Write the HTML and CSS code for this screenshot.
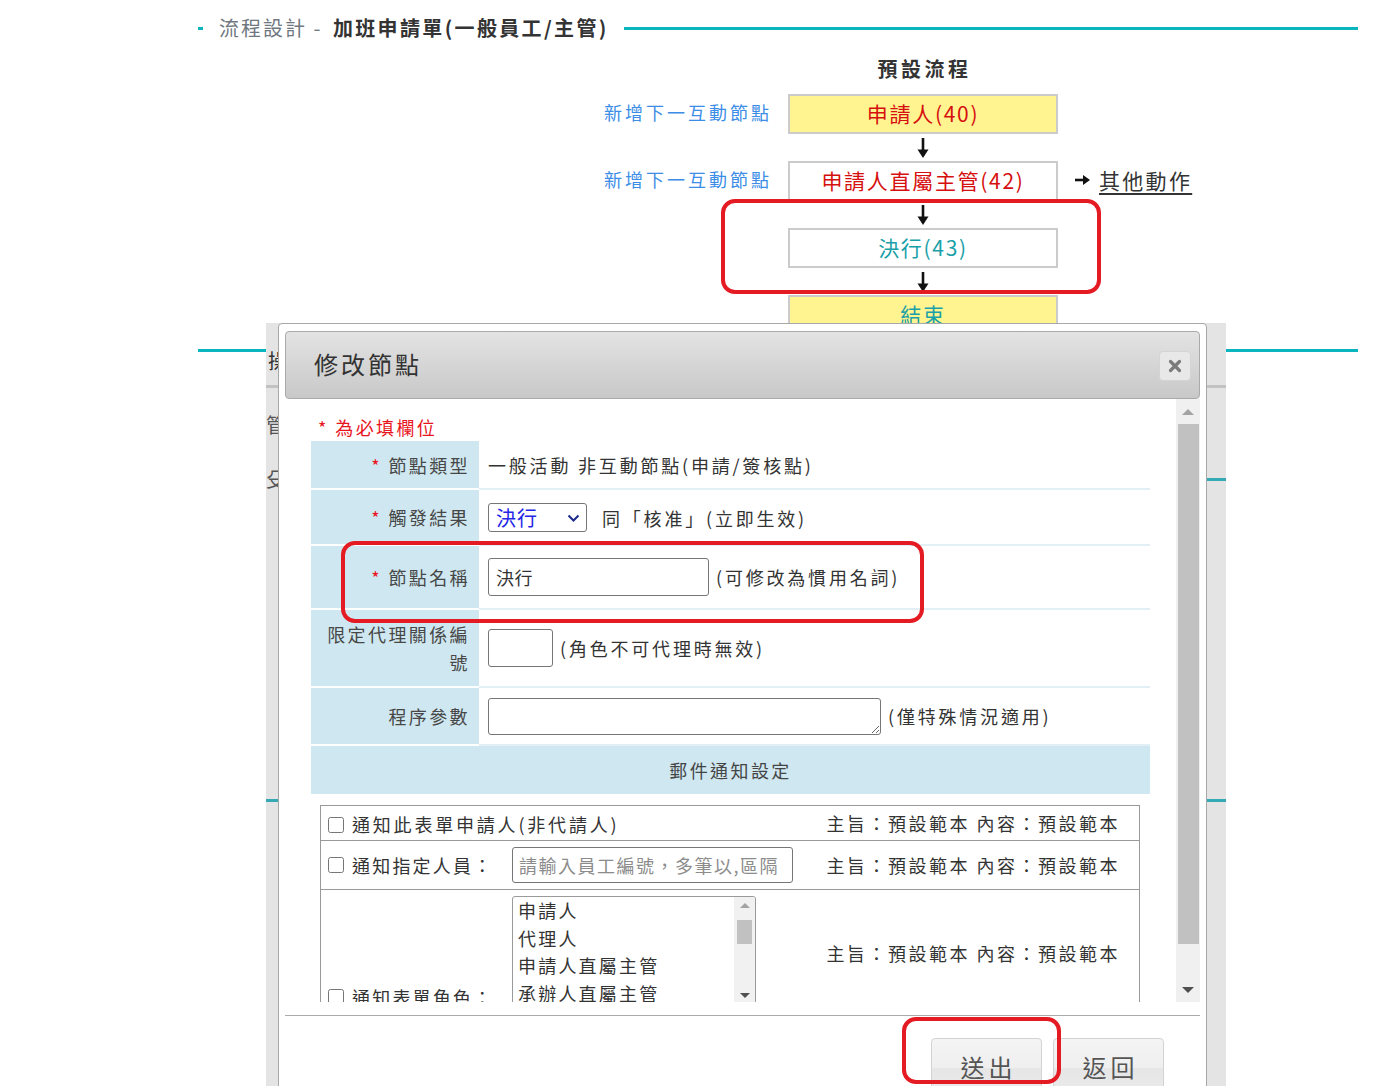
FILE: index.html
```html
<!DOCTYPE html>
<html lang="zh-Hant">
<head>
<meta charset="utf-8">
<title>修改節點</title>
<link rel="stylesheet" href="styles.css">
</head>
<body>
<div class="page">
  <header class="sec-head">
    <span class="dash"></span>
    <h1 class="sec-title"><span class="crumb">流程設計 - </span><b>加班申請單(一般員工/主管)</b></h1>
    <span class="rule"></span>
  </header>

  <section class="flow">
    <div class="flow-title">預設流程</div>

    <a class="add-link row-a">新增下一互動節點</a>
    <div class="node yellow row-a"><span class="red">申請人(40)</span></div>
    <div class="arrow row-b"><svg width="14" height="20" viewBox="0 0 14 20"><path d="M7 0V13" stroke="#111" stroke-width="2.6"/><path d="M1.5 11.5H12.5L7 20Z" fill="#111"/></svg></div>

    <a class="add-link row-c">新增下一互動節點</a>
    <div class="node row-c"><span class="red">申請人直屬主管(42)</span></div>
    <div class="more row-c"><svg width="15" height="12" viewBox="0 0 15 12"><path d="M0 6H9" stroke="#111" stroke-width="2.6"/><path d="M8 1L15 6L8 11Z" fill="#111"/></svg><a class="more-link">其他動作</a></div>
    <div class="arrow row-d"><svg width="14" height="20" viewBox="0 0 14 20"><path d="M7 0V13" stroke="#111" stroke-width="2.6"/><path d="M1.5 11.5H12.5L7 20Z" fill="#111"/></svg></div>

    <div class="node row-e"><span class="teal">決行(43)</span></div>
    <div class="arrow row-f"><svg width="14" height="20" viewBox="0 0 14 20"><path d="M7 0V13" stroke="#111" stroke-width="2.6"/><path d="M1.5 11.5H12.5L7 20Z" fill="#111"/></svg></div>

    <div class="node yellow row-g"><span class="teal">結束</span></div>
  </section>

  <section class="lower">
    <div class="side"><div class="side-line"></div></div>
    <div class="panel">
      <div class="p-title">操作說明</div>
      <div class="p-bar"></div>
      <div class="p-item">管理者設定</div>
      <div class="p-row"><span class="p-text">殳</span><span class="p-rule"></span></div>
      <div class="p-line"></div>
    </div>
    <div class="side right"><div class="side-line"></div></div>
  </section>
</div>

<div class="dialog">
  <div class="dlg-title">
    <span class="dlg-title-text">修改節點</span>
    <span class="dlg-close"><svg width="14" height="14" viewBox="0 0 14 14"><path d="M2.5 2.5L11.5 11.5M11.5 2.5L2.5 11.5" stroke="#7b7b7b" stroke-width="3.2" stroke-linecap="round"/></svg></span>
  </div>

  <div class="dlg-body">
    <div class="dlg-content">
      <div class="req-note">* 為必填欄位</div>
      <table class="form">
        <tr class="h1">
          <th><span class="req">*</span> 節點類型</th>
          <td>一般活動 非互動節點(申請/簽核點)</td>
        </tr>
        <tr class="h2">
          <th><span class="req">*</span> 觸發結果</th>
          <td><span class="sel"><select><option>決行</option></select><svg class="chev" width="13" height="8" viewBox="0 0 13 8"><path d="M1.5 1.5L6.5 6.5L11.5 1.5" fill="none" stroke="#1c2a8a" stroke-width="2"/></svg></span><span class="after wide">同「核准」(立即生效)</span></td>
        </tr>
        <tr class="h3">
          <th><span class="req">*</span> 節點名稱</th>
          <td><input class="txt name" type="text" value="決行"><span class="after">(可修改為慣用名詞)</span></td>
        </tr>
        <tr class="h4">
          <th>限定代理關係編號</th>
          <td><input class="txt short" type="text"><span class="after">(角色不可代理時無效)</span></td>
        </tr>
        <tr class="h5">
          <th>程序參數</th>
          <td><textarea class="area"></textarea><span class="after">(僅特殊情況適用)</span></td>
        </tr>
        <tr class="h6">
          <th colspan="2" class="section">郵件通知設定</th>
        </tr>
      </table>

      <div class="notify">
        <div class="n-row ra">
          <div class="n-left"><input type="checkbox" class="cb"><span>通知此表單申請人(非代請人)</span></div>
          <div class="subj">主旨：預設範本 內容：預設範本</div>
        </div>
        <div class="n-row rb">
          <div class="n-left"><input type="checkbox" class="cb"><span class="lbl">通知指定人員：</span><input class="txt emp" type="text" placeholder="請輸入員工編號，多筆以,區隔"></div>
          <div class="subj">主旨：預設範本 內容：預設範本</div>
        </div>
        <div class="n-row rc">
          <div class="n-left"><input type="checkbox" class="cb"><span class="lbl">通知表單角色：</span><div class="listbox"><div class="lb-inner"><ul class="lb-items"><li>申請人</li><li>代理人</li><li>申請人直屬主管</li><li>承辦人直屬主管</li><li>承辦人</li></ul><div class="lb-bar"><span class="lb-btn"><span class="tri-up small"></span></span><span class="lb-thumb"></span><span class="lb-fill"></span><span class="lb-btn"><span class="tri-dn small"></span></span></div></div></div></div>
          <div class="subj">主旨：預設範本 內容：預設範本</div>
        </div>
      </div>
    </div>
    <div class="vbar">
      <span class="vbtn"><span class="tri-up"></span></span>
      <span class="vthumb"></span>
      <span class="vfill"></span>
      <span class="vbtn"><span class="tri-dn"></span></span>
    </div>
  </div>

  <div class="dlg-foot">
    <button class="btn">送出</button>
    <button class="btn">返回</button>
  </div>
</div>

<div class="mark m1"></div>
<div class="mark m2"></div>
<div class="mark m3"></div>
</body>
</html>
```

FILE: styles.css
```css
* { box-sizing: border-box; }
html, body { margin: 0; height: 100%; overflow: hidden; background: #fff; }
body {
  font-family: "Noto Sans CJK TC", "Noto Sans", sans-serif;
  color: #333;
  width: 1373px;
  position: relative;
}

/* ---------- page header ---------- */
.page { padding-left: 198px; width: 1358px; }
.sec-head { display: flex; align-items: center; height: 28px; margin-top: 14px; }
.sec-head .dash { width: 5px; height: 3px; background: #0bb5c0; margin-right: 16px; flex: none; }
.sec-title { margin: 0; font-size: 20px; font-weight: 400; letter-spacing: 2px; line-height: 28px; color: #6f7780; white-space: nowrap; }
.sec-title b { color: #333; font-weight: 700; letter-spacing: 2.35px; margin-left: 4px; }
.sec-head .rule { flex: 1; height: 3px; background: #0bb5c0; margin-left: 15px; }

/* ---------- flow diagram ---------- */
.flow {
  height: 281px;
  overflow: hidden;
  padding-top: 16px;
  display: grid;
  grid-template-columns: 572px 270px auto;
  grid-template-rows: 36px 40px 27px 40px 27px 40px 27px 40px;
  column-gap: 18px;
  align-items: center;
}
.flow-title {
  grid-column: 2; grid-row: 1; align-self: start;
  text-align: center; font-size: 20px; font-weight: 700; letter-spacing: 3.5px; padding-left: 3px;
  line-height: 22px; color: #333;
}
.row-a { grid-row: 2; }
.row-b { grid-row: 3; }
.row-c { grid-row: 4; }
.row-d { grid-row: 5; }
.row-e { grid-row: 6; }
.row-f { grid-row: 7; }
.row-g { grid-row: 8; }
.add-link {
  grid-column: 1; justify-self: end; margin-right: -2px; margin-bottom: 4px;
  color: #3b8de6; font-size: 18px; letter-spacing: 3px; text-decoration: none;
}
.node {
  grid-column: 2; height: 40px; border: 2px solid #cbcbcb; background: #fff;
  display: flex; align-items: center; justify-content: center; padding-bottom: 3px;
  font-size: 21px; letter-spacing: 1.7px;
}
.node.yellow { background: #fff48f; }
.red { color: #d60f0f; }
.teal { color: #1aa0a8; }
.arrow { grid-column: 2; justify-self: center; height: 20px; }
.arrow svg { display: block; }
.more { grid-column: 3; display: flex; align-items: center; gap: 9px; margin-left: -1px; margin-bottom: 2px; }
.more-link { font-size: 21px; letter-spacing: 2.3px; color: #333; text-decoration: underline; text-underline-offset: 4px; }

/* ---------- lower background section ---------- */
.lower { display: flex; height: 780px; }
.side { width: 68px; padding-top: 26px; flex: none; }
.side.right { width: 132px; }
.side-line { height: 3px; background: #0bb5c0; }
.panel { width: 960px; flex: none; background: #e4e4e4; }
.p-title { margin: 27px 0 0 2px; font-size: 20px; line-height: 22px; color: #333; }
.p-bar { margin-top: 13px; height: 3px; background: #c2c2c2; }
.p-item { margin-top: 27px; font-size: 20px; line-height: 20px; color: #555; }
.p-row { margin-top: 33px; height: 22px; display: flex; align-items: center; }
.p-text { font-size: 20px; line-height: 22px; color: #555; }
.p-rule { flex: 1; height: 3px; background: #34aab5; margin-left: 20px; }
.p-line { margin-top: 309px; height: 3px; background: #34aab5; }

/* ---------- dialog ---------- */
.dialog {
  position: absolute; left: 278px; top: 323px; width: 929px; height: 790px;
  border: 1px solid #a8a8a8; border-radius: 4px; background: #fff;
  padding: 7px 6px 0; display: flex; flex-direction: column;
}
.dlg-title {
  height: 68px; flex: none; border: 1px solid #aaa; border-radius: 4px;
  background: linear-gradient(#e3e3e3, #c8c8c8);
  display: flex; align-items: center; justify-content: space-between;
  padding: 0 8px 0 28px;
}
.dlg-title-text { font-size: 24px; letter-spacing: 3px; color: #333; margin-top: -3px; }
.dlg-close {
  width: 32px; height: 30px; margin-top: 1px; border: 1px solid #d4d4d4; border-radius: 4px; background: #e8e8e8;
  display: flex; align-items: center; justify-content: center;
}
.dlg-body { height: 603px; flex: none; display: flex; }
.dlg-content { flex: 1; overflow: hidden; padding: 15px 26px 0; }

.req-note { font-size: 18px; line-height: 26px; letter-spacing: 2.4px; color: #e8141c; padding-left: 7px; margin-bottom: 1px; }

.form { width: 100%; border-collapse: separate; border-spacing: 0; font-size: 18px; letter-spacing: 2.8px; color: #333; }
.form th, .form td { box-sizing: border-box; vertical-align: middle; }
.form th {
  width: 168px; background: #cfe7f0; text-align: right; font-weight: 400; color: #474747;
  padding: 0 9px 0 10px; border-bottom: 2px solid #fff; line-height: 28px; letter-spacing: 2.4px;
}
.form td { padding: 0 0 0 9px; border-bottom: 2px solid #e2eff5; white-space: nowrap; }
.h1 th, .h1 td { height: 49px; }
.h2 th, .h2 td { height: 56px; }
.h3 th, .h3 td { height: 64px; }
.h4 th, .h4 td { height: 78px; }
.h5 th, .h5 td { height: 58px; }
.form th.section { height: 48px; text-align: center; padding: 0; border-bottom: 0; color: #444; letter-spacing: 2.4px; }
.req { color: #e8141c; }
.after { margin-left: 7px; vertical-align: middle; }
.after.wide { margin-left: 15px; }

.sel { position: relative; display: inline-block; width: 99px; height: 29px; vertical-align: middle; }
.sel select {
  appearance: none; -webkit-appearance: none; width: 100%; height: 100%;
  border: 1px solid #767676; border-radius: 3px; background: #fff;
  font-family: inherit; font-size: 20px; letter-spacing: 1px; color: #2525e8; padding: 0 0 0 7px; line-height: 27px;
}
.sel .chev { position: absolute; right: 7px; top: 11px; pointer-events: none; }

.txt {
  border: 1px solid #767676; border-radius: 3px; background: #fff;
  font-family: inherit; font-size: 18px; color: #333; padding: 0 7px; vertical-align: middle; letter-spacing: 0.5px;
}
.txt.name { width: 221px; height: 38px; }
.txt.short { width: 65px; height: 38px; }
.area {
  width: 393px; height: 37px; border: 1px solid #767676; border-radius: 3px;
  font-family: inherit; font-size: 18px; vertical-align: middle; padding: 2px 6px;
}

/* notify box */
.notify { margin: 11px 10px 0 9px; border: 1px solid #999; border-bottom: 0; font-size: 18px; color: #333; }
.n-row { display: grid; grid-template-columns: 1fr auto; align-items: center; border-bottom: 1px solid #999; }
.ra { height: 35px; }
.rb { height: 49px; }
.n-left { padding-left: 7px; white-space: nowrap; letter-spacing: 2.8px; }
.cb { width: 16px; height: 16px; margin: 0 8px 0 0; vertical-align: middle; }
.n-left span { vertical-align: middle; }
.lbl { display: inline-block; width: 160px; letter-spacing: 2.2px; }
.subj { padding-right: 19px; text-align: right; letter-spacing: 2.5px; white-space: nowrap; }
.txt.emp { width: 281px; height: 36px; padding: 0 6px; }
.txt.emp::placeholder { color: #8c8c8c; letter-spacing: 1.5px; }

.rc .n-left { padding-top: 6px; padding-bottom: 6px; }
.rc .n-left .cb, .rc .n-left .lbl { vertical-align: baseline; }
.listbox {
  display: inline-block; width: 244px; height: 109px; vertical-align: baseline;
  border: 1px solid #9a9a9a; border-radius: 3px; overflow: hidden;
}
.lb-inner { display: flex; height: 100%; }
.lb-items { flex: 1; margin: 0; padding: 0 0 0 5px; list-style: none; line-height: 27.5px; font-size: 18px; letter-spacing: 2.2px; color: #333; }
.lb-bar { width: 21px; background: #f1f1f1; display: flex; flex-direction: column; align-items: center; }
.lb-btn { height: 17px; width: 100%; display: flex; align-items: center; justify-content: center; flex: none; }
.lb-thumb { width: 15px; height: 24px; background: #c1c1c1; margin-top: 6px; flex: none; }
.lb-fill { flex: 1; }

.tri-up, .tri-dn { width: 0; height: 0; border-left: 6px solid transparent; border-right: 6px solid transparent; }
.tri-up { border-bottom: 6px solid #a3a3a3; }
.tri-dn { border-top: 6px solid #505050; }
.tri-up.small, .tri-dn.small { border-left-width: 5px; border-right-width: 5px; }
.tri-up.small { border-bottom-width: 5px; }
.tri-dn.small { border-top-width: 5px; }

/* dialog vertical scrollbar */
.vbar { width: 24px; flex: none; background: #f0f0f0; display: flex; flex-direction: column; align-items: center; }
.vbtn { height: 25px; width: 100%; display: flex; align-items: center; justify-content: center; flex: none; }
.vthumb { width: 21px; height: 520px; background: #c1c1c1; flex: none; }
.vfill { flex: 1; }

/* footer */
.dlg-foot { margin-top: 13px; border-top: 1px solid #aaa; padding: 22px 36px 0 0; display: flex; justify-content: flex-end; gap: 11px; }
.btn {
  width: 111px; padding: 11px 0 13px 4px; line-height: 34px;
  font-family: inherit; font-size: 24px; letter-spacing: 4px; color: #555;
  border: 1px solid #d3d3d3; border-radius: 4px;
  background: linear-gradient(#f4f4f4 0%, #efefef 50%, #e6e6e6 51%, #ebebeb 100%);
}

/* annotation marks */
.mark { position: absolute; border: 4px solid #e41b23; border-radius: 14px; pointer-events: none; }
.m1 { left: 721px; top: 199px; width: 380px; height: 95px; }
.m2 { left: 341px; top: 541px; width: 583px; height: 82px; }
.m3 { left: 902px; top: 1017px; width: 159px; height: 67px; }
```
